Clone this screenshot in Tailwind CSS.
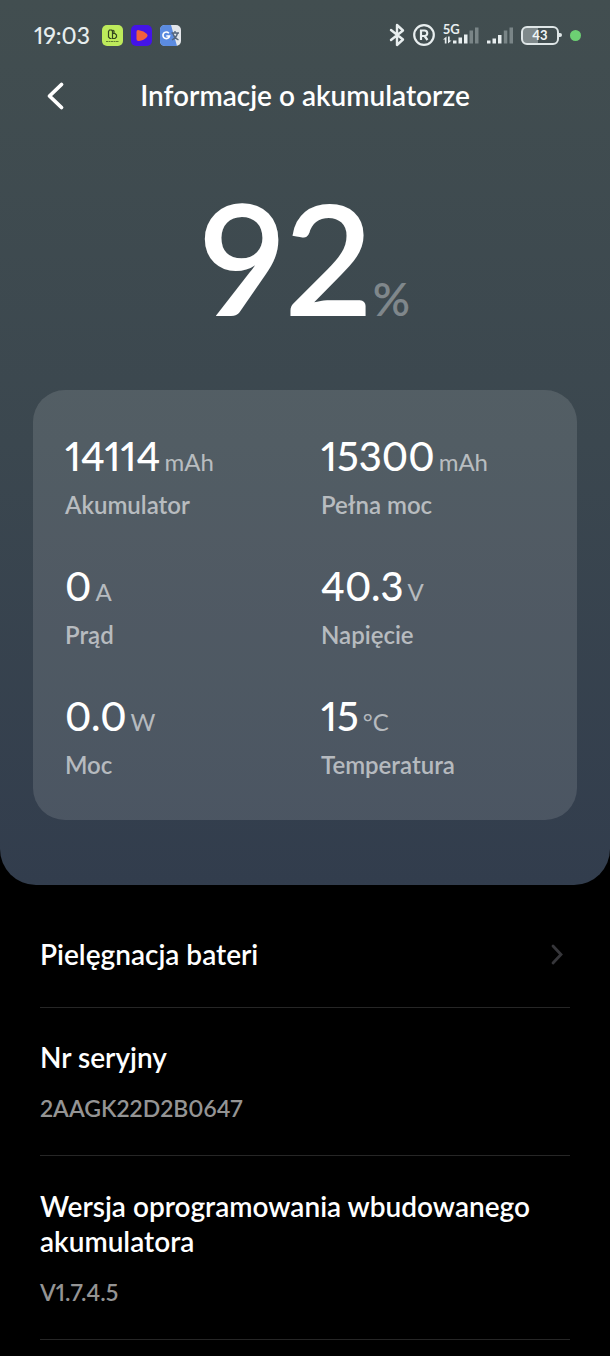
<!doctype html>
<html lang="pl">

<head>
    <meta charset="UTF-8" />
    <meta name="viewport" content="width=device-width, initial-scale=1.0" />
    <title>Informacje o akumulatorze</title>
    <script src="https://cdn.jsdelivr.net/npm/@tailwindcss/browser@4"></script>
</head>

<body class="min-h-screen bg-black text-white proportional-nums font-['Lato','Noto_Sans',sans-serif]">
    <header class="rounded-b-[36px] bg-linear-to-b from-[#424e50] via-[#3b474f] to-[#323d4d] pb-[65px]">
        <!-- status bar -->
        <div class="flex h-[70px] items-center justify-between pl-[34px] pr-[29px]">
            <div class="flex items-center gap-2">
                <time class="mr-1 text-[23px] font-medium text-[#e6edee]">19:03</time>
                <svg class="size-[21px]" viewBox="0 0 21 21" fill="none">
                    <rect width="21" height="21" rx="5" fill="#bdea5b" />
                    <path d="M9.500 13.500H8L6.500 12V6.500L7.500 5H9.500L10.500 6.500V13.500H13L14.500 12V10L13 8.500H10.500M12 8.500V6L10.500 5" stroke="#33451d" stroke-width="1.200" />
                    <path d="M4 16.500H17" stroke="#5f7d30" stroke-width="1.200" stroke-dasharray="2 .5" />
                </svg>
                <svg class="size-[21px]" viewBox="0 0 21 21">
                    <rect width="21" height="21" rx="5" fill="#4414e8" />
                    <path d="M5.500 7Q5.500 4.500 8 5.200Q13 5.800 16 9Q17.200 10.500 16 12Q13 15.500 8 16Q5.500 16.400 5.500 14Z" fill="#f2603c" />
                </svg>
                <svg class="size-[21px]" viewBox="0 0 21 21" fill="none">
                    <rect width="21" height="21" rx="5" fill="#e3e6ea" />
                    <path d="M5 0H11L17 21H5Q0 21 0 16V5Q0 0 5 0Z" fill="#5b8be0" />
                    <path d="M8.800 8.200A3.300 3.300 0 1 0 9.500 11H6.300" stroke="#fff" stroke-width="1.700" />
                    <path d="M11.500 8H19M15 6V8M17.500 8Q16.500 12.500 12 15M12.800 8Q14 12.500 18.500 15" stroke="#55667c" stroke-width="1.400" />
                </svg>
            </div>
            <div class="flex items-center gap-2">
                <svg class="h-6 w-4" viewBox="0 0 16 24" fill="none" stroke="#e8eeef" stroke-width="2.400" stroke-linejoin="round" stroke-linecap="round">
                    <path d="M2 7L14 16.500L8 22V2L14 7.500L2 17" />
                </svg>
                <svg class="size-[22px]" viewBox="0 0 22 22" fill="none" stroke="#e8eeef" stroke-width="2.200">
                    <circle cx="11" cy="11" r="9.800" />
                    <path d="M8 16V6.500H11.500A2.700 2.700 0 0 1 11.500 12H8M11.500 12L14.500 16" />
                </svg>
                <div class="relative h-[22px] w-9">
                    <span class="absolute left-0 -top-px text-[13px] leading-none font-bold text-[#e8eeef]">5G</span>
                    <svg class="h-[22px] w-9" viewBox="0 0 36 22">
                        <path d="M0 15.500L3.500 12.500V19.500H1.800V15.500ZM5 12.500H6.700V16.500H8.500L5 19.500Z" fill="#e8eeef" />
                        <path d="M10 16.500H13.500V19.500H10ZM15.500 13.500H19V19.500H15.500ZM21 10.500H24.500V19.500H21Z" fill="#e8eeef" />
                        <path d="M26.500 6.500H30V19.500H26.500ZM32 3.500H35.500V19.500H32Z" fill="#7a8587" />
                    </svg>
                </div>
                <svg class="h-[22px] w-[26px]" viewBox="0 0 26 22">
                    <path d="M0 16.500H3.500V19.500H0ZM5.500 14.500H9V19.500H5.500ZM11 11H14.500V19.500H11Z" fill="#e8eeef" />
                    <path d="M16.800 6.500H20.300V19.500H16.800ZM22.500 3.500H26V19.500H22.500Z" fill="#7a8587" />
                </svg>
                <div class="flex items-center">
                    <div class="flex h-[19px] w-[38px] items-center justify-center rounded-md border-2 border-[#dfe6e7] bg-linear-to-r from-[#7f898b] from-43% to-transparent to-43% text-[13px] leading-none font-bold text-[#f0f5f5]">43</div>
                    <div class="h-1 w-[3px] rounded-r-sm bg-[#dfe6e7]"></div>
                </div>
                <div class="size-[11px] rounded-full bg-[#6dd073]"></div>
            </div>
        </div>

        <!-- title bar -->
        <div class="grid h-[50px] grid-cols-[1fr_auto_1fr] items-center px-10">
            <button type="button" aria-label="Wstecz" class="flex size-8 items-center justify-center">
                <svg class="h-8 w-6" viewBox="0 0 24 32" fill="none" stroke="#fff" stroke-width="3.800" stroke-linecap="round" stroke-linejoin="round">
                    <path d="M17.500 5.500L5.500 17L17.500 28.500" />
                </svg>
            </button>
            <h1 class="text-[28px] leading-[35px] font-semibold">Informacje o akumulatorze</h1>
        </div>

        <div class="flex items-baseline justify-center pt-[60px] pb-14 leading-none">
            <span class="text-[154px] leading-none font-semibold">92</span>
            <span class="text-[46px] leading-none font-semibold text-white/35">%</span>
        </div>

        <dl class="mx-[33px] grid grid-cols-[256fr_224fr] gap-y-[41px] rounded-[32px] bg-white/12 px-8 pt-[42px] pb-[39px]">
            <div class="flex flex-col-reverse gap-[9px]">
                <dt class="text-2xl leading-8 font-semibold text-white/60">Akumulator</dt>
                <dd class="text-[40px] leading-[48px] font-medium">14114<span class="ml-1 text-2xl font-normal text-white/60">mAh</span></dd>
            </div>
            <div class="flex flex-col-reverse gap-[9px]">
                <dt class="text-2xl leading-8 font-semibold text-white/60">Pełna moc</dt>
                <dd class="text-[40px] leading-[48px] font-medium">15300<span class="ml-1 text-2xl font-normal text-white/60">mAh</span></dd>
            </div>
            <div class="flex flex-col-reverse gap-[9px]">
                <dt class="text-2xl leading-8 font-semibold text-white/60">Prąd</dt>
                <dd class="text-[40px] leading-[48px] font-medium">0<span class="ml-1 text-2xl font-normal text-white/60">A</span></dd>
            </div>
            <div class="flex flex-col-reverse gap-[9px]">
                <dt class="text-2xl leading-8 font-semibold text-white/60">Napięcie</dt>
                <dd class="text-[40px] leading-[48px] font-medium">40.3<span class="ml-1 text-2xl font-normal text-white/60">V</span></dd>
            </div>
            <div class="flex flex-col-reverse gap-[9px]">
                <dt class="text-2xl leading-8 font-semibold text-white/60">Moc</dt>
                <dd class="text-[40px] leading-[48px] font-medium">0.0<span class="ml-1 text-2xl font-normal text-white/60">W</span></dd>
            </div>
            <div class="flex flex-col-reverse gap-[9px]">
                <dt class="text-2xl leading-8 font-semibold text-white/60">Temperatura</dt>
                <dd class="text-[40px] leading-[48px] font-medium">15<span class="ml-1 text-2xl font-normal text-white/60">°C</span></dd>
            </div>
        </dl>
    </header>

    <main class="px-10 pt-4">
        <a href="#" class="flex items-center justify-between border-b border-[#262626] pt-9 pb-[35px]">
            <span class="text-[28px] leading-[35px] font-semibold">Pielęgnacja bateri</span>
            <svg class="mr-1 h-6 w-4" viewBox="0 0 16 24" fill="none" stroke="#36363a" stroke-width="2.800" stroke-linecap="round">
                <path d="M3 3L11 11.500L3 20" />
            </svg>
        </a>
        <section class="border-b border-[#262626] pt-8 pb-[31px]">
            <h2 class="text-[28px] leading-[35px] font-semibold">Nr seryjny</h2>
            <p class="mt-[17px] text-[23px] leading-8 font-semibold text-[#949494]">2AAGK22D2B0647</p>
        </section>
        <section class="border-b border-[#262626] pt-[33px] pb-[31px]">
            <h2 class="text-[28px] leading-[35px] font-semibold">Wersja oprogramowania wbudowanego akumulatora</h2>
            <p class="mt-[17px] text-[23px] leading-8 font-semibold text-[#949494]">V1.7.4.5</p>
        </section>
    </main>
</body>
</html>
